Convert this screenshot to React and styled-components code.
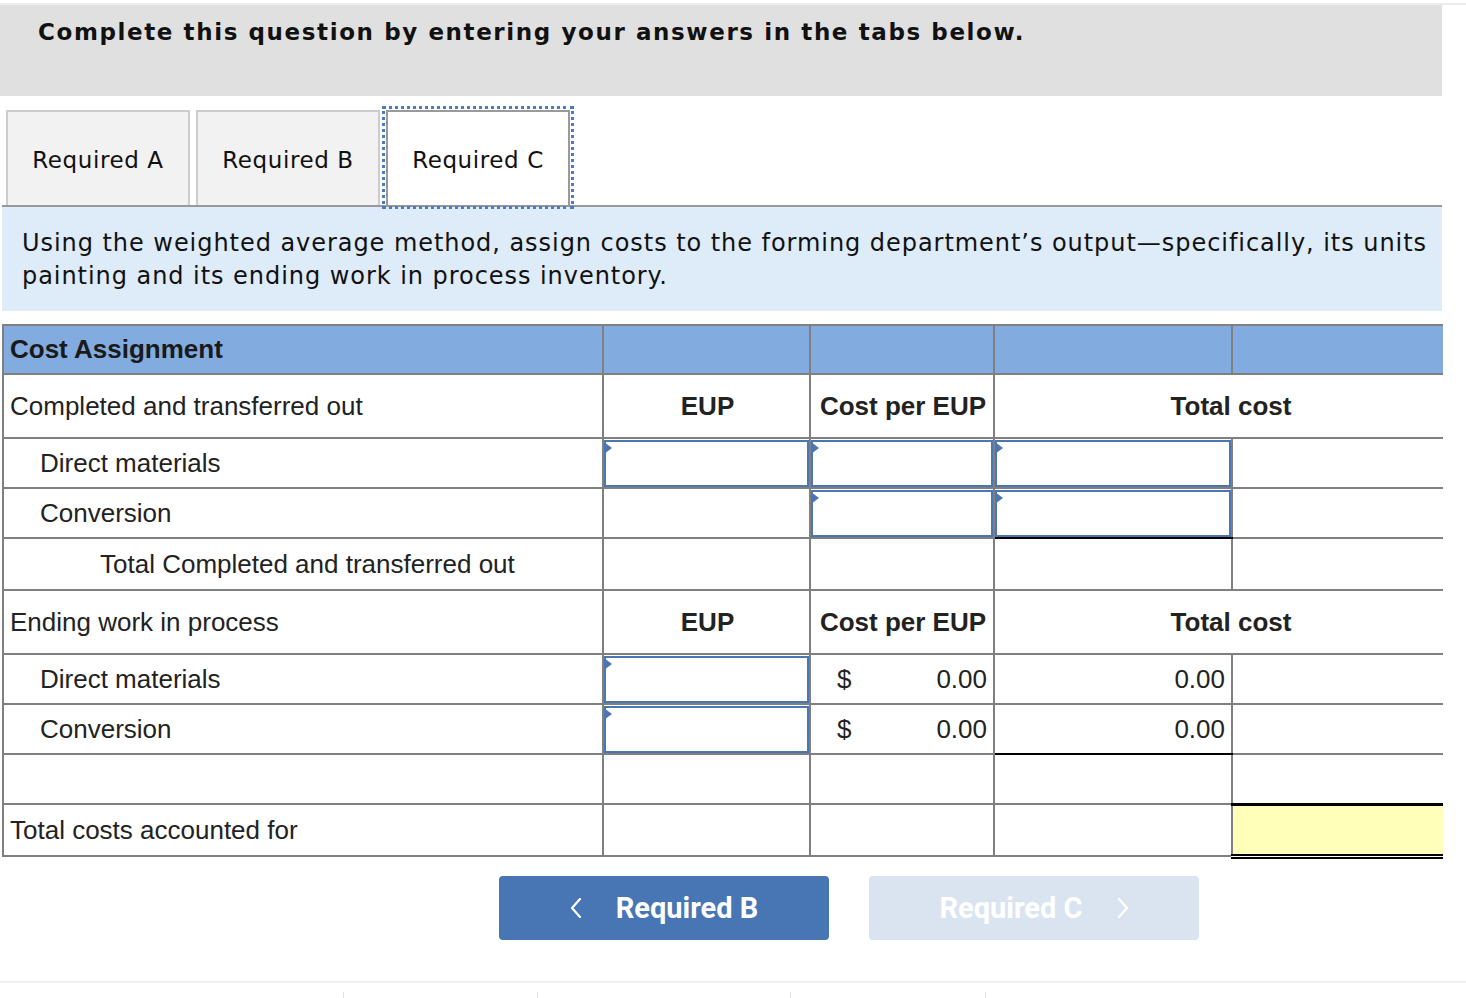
import React from 'react';
import styled, { createGlobalStyle } from 'styled-components';

const GlobalStyle = createGlobalStyle`
  body {
    margin: 0;
    background: #ffffff;
    font-family: "DejaVu Sans", Verdana, sans-serif;
  }
`

export default function App() {
  return (
    <Page>
      <GlobalStyle />
      <TopStrip />
      <Content>
        <Instructions>Complete this question by entering your answers in the tabs below.</Instructions>

        <TabStrip>
          <Tab>Required A</Tab>
          <Tab>Required B</Tab>
          <Tab $active>Required C</Tab>
        </TabStrip>

        <Prompt>
          Using the weighted average method, assign costs to the forming department’s output—specifically, its units
          painting and its ending work in process inventory.
        </Prompt>

        <Table>
          <colgroup>
            <col style={{ width: 600 }} />
            <col style={{ width: 207 }} />
            <col style={{ width: 184 }} />
            <col style={{ width: 238 }} />
            <col style={{ width: 211 }} />
          </colgroup>
          <tbody>
            <Row $h={49}>
              <HeadCell $bold $pad={6}>Cost Assignment</HeadCell>
              <HeadCell />
              <HeadCell />
              <HeadCell />
              <HeadCell />
            </Row>

            <Row $h={64}>
              <Cell $pad={6}>Completed and transferred out</Cell>
              <Cell $bold $align="center">EUP</Cell>
              <Cell $bold $align="center">Cost per EUP</Cell>
              <TotalHead $bold $align="center" colSpan={2}>Total cost</TotalHead>
            </Row>
            <Row $h={50}>
              <Cell $pad={36}>Direct materials</Cell>
              <InputCell><InputBox /></InputCell>
              <InputCell><InputBox /></InputCell>
              <InputCell><InputBox /></InputCell>
              <Cell />
            </Row>
            <Row $h={50}>
              <Cell $pad={36}>Conversion</Cell>
              <Cell />
              <InputCell><InputBox /></InputCell>
              <InputCell $black><InputBox /></InputCell>
              <Cell />
            </Row>
            <Row $h={52}>
              <Cell $pad={96}>Total Completed and transferred out</Cell>
              <Cell />
              <Cell />
              <Cell />
              <Cell />
            </Row>

            <Row $h={64}>
              <Cell $pad={6}>Ending work in process</Cell>
              <Cell $bold $align="center">EUP</Cell>
              <Cell $bold $align="center">Cost per EUP</Cell>
              <TotalHead $bold $align="center" colSpan={2}>Total cost</TotalHead>
            </Row>
            <Row $h={50}>
              <Cell $pad={36}>Direct materials</Cell>
              <InputCell><InputBox /></InputCell>
              <Cell><Money><span>$</span><span>0.00</span></Money></Cell>
              <Cell $align="right">0.00</Cell>
              <Cell />
            </Row>
            <Row $h={50}>
              <Cell $pad={36}>Conversion</Cell>
              <InputCell><InputBox /></InputCell>
              <Cell><Money><span>$</span><span>0.00</span></Money></Cell>
              <Cell $align="right" $black>0.00</Cell>
              <Cell />
            </Row>
            <Row $h={50}>
              <Cell />
              <Cell />
              <Cell />
              <Cell />
              <Cell />
            </Row>
            <Row $h={52}>
              <Cell $pad={6}>Total costs accounted for</Cell>
              <Cell />
              <Cell />
              <Cell />
              <TotalCell />
            </Row>
          </tbody>
        </Table>

        <NavRow>
          <NavButton>
            <Chevron dir="left" />
            <span>Required B</span>
          </NavButton>
          <NavButton $disabled>
            <span>Required C</span>
            <Chevron dir="right" />
          </NavButton>
        </NavRow>
      </Content>

      <Footer>
        <FooterCell />
        <FooterCell $divider />
        <FooterCell $divider />
        <FooterCell $divider />
        <FooterCell $divider />
      </Footer>
    </Page>
  );
}

function Chevron({ dir }) {
  const d = dir === 'left' ? 'M10 1 L2 10 L10 19' : 'M2 1 L10 10 L2 19';
  return (
    <svg width="12" height="20" viewBox="0 0 12 20">
      <path d={d} fill="none" stroke="#ffffff" strokeWidth="2.2" strokeLinecap="round" strokeLinejoin="round" />
    </svg>
  );
}

const Page = styled.div`
width: 1466px;
padding-top: 3px;
`

const TopStrip = styled.div`
height: 2px;
background-color: #ececec;
`

const Content = styled.div`
width: 1440px;
padding-left: 2px;
`

const Instructions = styled.div`
box-sizing: border-box;
height: 91px;
margin-left: -2px;
width: 1442px;
background-color: #e0e0e0;
padding: 14px 38px;
font-family: "DejaVu Sans", Verdana, sans-serif;
font-size: 23px;
letter-spacing: 1.6px;
font-weight: bold;
color: #111111;
white-space: nowrap;
`

const TabStrip = styled.div`
display: flex;
gap: 6px;
margin-top: 14px;
padding-left: 4px;
border-bottom: 2px solid #999999;
`

const Tab = styled.div`
box-sizing: border-box;
width: 184px;
height: 95px;
display: flex;
align-items: center;
justify-content: center;
padding-top: 2px;
font-family: "DejaVu Sans", Verdana, sans-serif;
font-size: 23px;
letter-spacing: 0.6px;
color: #111111;
background-color: ${p => (p.$active ? '#ffffff' : '#f2f2f2')};
border: 2px solid ${p => (p.$active ? '#9a9a9a' : '#cccccc')};
border-bottom: none;
outline: ${p => (p.$active ? '3px dotted #4a7bc4' : 'none')};
outline-offset: 1px;
`

const Prompt = styled.div`
background-color: #deebf8;
padding: 20px 4px 18px 20px;
font-family: "DejaVu Sans", Verdana, sans-serif;
font-size: 24px;
letter-spacing: 0.95px;
line-height: 33px;
color: #111111;
`

const Table = styled.table`
margin-top: 13px;
width: 1440px;
table-layout: fixed;
border-collapse: collapse;
font-family: "Liberation Sans", Arial, Helvetica, sans-serif;
font-size: 26px;
color: #222222;
`

const Row = styled.tr`
height: ${p => p.$h}px;
`

const Cell = styled.td`
border: 2px solid #808080;
border-right: none;
border-bottom: 2px solid ${p => (p.$black ? '#000000' : '#808080')};
padding: 0 6px 0 ${p => p.$pad || 8}px;
text-align: ${p => p.$align || 'left'};
font-weight: ${p => (p.$bold ? 'bold' : 'normal')};
vertical-align: middle;
white-space: nowrap;
&:not(:last-child) {
  border-right: 2px solid #808080;
}
`

const HeadCell = styled(Cell)`
background-color: #82abdf;
color: #1a1a1a;
`

const TotalHead = styled(Cell)`
padding-left: 30px;
`

const InputCell = styled(Cell)`
padding: 0;
`

const InputBox = styled.div`
position: relative;
box-sizing: border-box;
width: 100%;
height: 47px;
background-color: #ffffff;
border: 2px solid #4a77b4;
&::before {
  content: '';
  position: absolute;
  top: 0;
  left: -2px;
  border-top: 6px solid transparent;
  border-bottom: 6px solid transparent;
  border-left: 8px solid #4a77b4;
}
`

const Money = styled.div`
display: flex;
justify-content: space-between;
padding-left: 18px;
`

const TotalCell = styled.td`
background-color: #ffffb9;
border-left: 2px solid #808080;
border-top: 3px solid #000000;
border-bottom: 5px double #000000;
`

const NavRow = styled.div`
display: flex;
gap: 40px;
margin-top: 17px;
padding-left: 497px;
`

const NavButton = styled.div`
box-sizing: border-box;
width: 330px;
height: 64px;
display: flex;
align-items: center;
justify-content: center;
gap: 34px;
border-radius: 4px;
background-color: ${p => (p.$disabled ? '#dae4f0' : '#4876b4')};
font-family: "Roboto", sans-serif;
font-size: 29px;
font-weight: bold;
color: #ffffff;
`

const Footer = styled.div`
display: grid;
grid-template-columns: 343px 194px 253px 195px 1fr;
margin-top: 41px;
border-top: 2px solid #f0f0f0;
padding-top: 9px;
`

const FooterCell = styled.div`
height: 10px;
border-left: ${p => (p.$divider ? '1px solid #e2e2e2' : 'none')};
`
